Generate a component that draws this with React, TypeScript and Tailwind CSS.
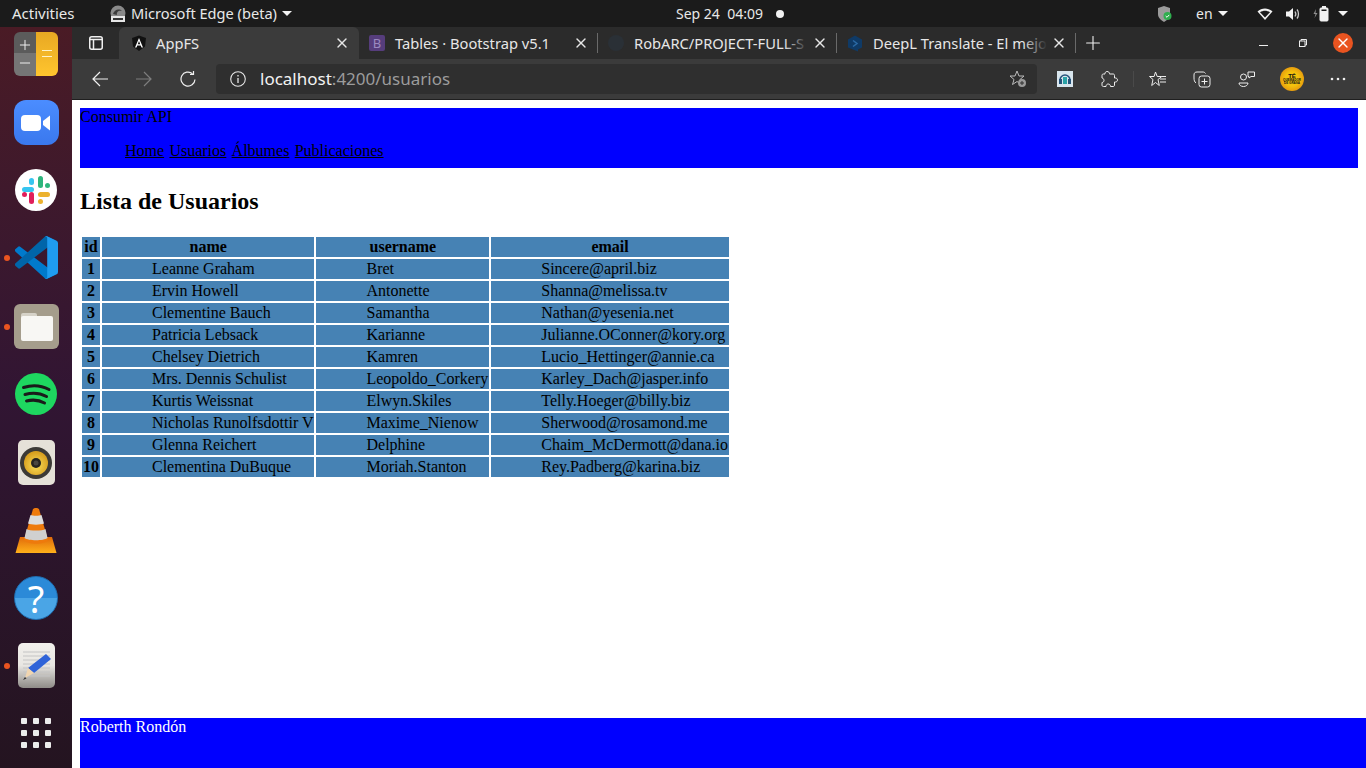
import React from "react";
import { X, Plus, Minus } from "lucide-react";

const users = [
  [1, "Leanne Graham", "Bret", "Sincere@april.biz"],
  [2, "Ervin Howell", "Antonette", "Shanna@melissa.tv"],
  [3, "Clementine Bauch", "Samantha", "Nathan@yesenia.net"],
  [4, "Patricia Lebsack", "Karianne", "Julianne.OConner@kory.org"],
  [5, "Chelsey Dietrich", "Kamren", "Lucio_Hettinger@annie.ca"],
  [6, "Mrs. Dennis Schulist", "Leopoldo_Corkery", "Karley_Dach@jasper.info"],
  [7, "Kurtis Weissnat", "Elwyn.Skiles", "Telly.Hoeger@billy.biz"],
  [8, "Nicholas Runolfsdottir V", "Maxime_Nienow", "Sherwood@rosamond.me"],
  [9, "Glenna Reichert", "Delphine", "Chaim_McDermott@dana.io"],
  [10, "Clementina DuBuque", "Moriah.Stanton", "Rey.Padberg@karina.biz"],
];

function Caret() {
  return <span className="inline-block w-0 h-0 border-l-[5px] border-r-[5px] border-t-[5px] border-l-transparent border-r-transparent border-t-[#f2f2f2]" />;
}

function TopBar() {
  return (
    <div className="h-[27px] shrink-0 bg-[#1b1b1b] flex items-center text-[#e8e8e8] text-[14.6px] relative">
      <span className="ml-[12px] w-[97px] text-[15px]">Activities</span>
      <svg width="18" height="18" viewBox="0 0 18 18" className="mr-[4px]">
        <circle cx="9" cy="8" r="7.5" fill="#8a8a8a" />
        <path d="M4 9c1-4 6-6 9-3-2-1-6 0-5 4z" fill="#3a3a3a" />
        <rect x="2" y="11" width="14" height="6" fill="#e6e6e6" />
        <rect x="4" y="13" width="10" height="2" fill="#333" />
      </svg>
      <span className="mr-[5px]">Microsoft Edge (beta)</span>
      <Caret />
      <div className="absolute left-[676px] top-0 h-[27px] flex items-center text-[14px]">
        <span>Sep 24&nbsp;&nbsp;04:09</span>
        <span className="ml-[13px] w-[8px] h-[8px] rounded-full bg-[#f2f2f2]" />
      </div>
      <div className="absolute left-[1157px] top-0 h-[27px] flex items-center text-[14px]">
        <svg width="16" height="18" viewBox="0 0 16 18"><path d="M1 3l6-2 6 2v6c0 4-3 6-6 8-3-2-6-4-6-8z" fill="#9b9b9b" /><circle cx="10.5" cy="11" r="4" fill="#2fae4e" /><path d="M8.7 11l1.3 1.3 2.2-2.4" stroke="#fff" strokeWidth="1" fill="none" /></svg>
        <span className="ml-[23px] mr-[5px]">en</span>
        <Caret />
        <svg width="16" height="14" viewBox="0 0 16 14" className="ml-[29px]"><path d="M0.5 4.5C4.5 0.5 11.5 0.5 15.5 4.5L8 13z" fill="#f2f2f2" /><path d="M3 5.2c3-2 7-2 10 0L8 10.5z" fill="#1b1b1b" /></svg>
        <svg width="16" height="14" viewBox="0 0 16 14" className="ml-[12px]"><path d="M1 4.5h3L8 1v12L4 9.5H1z" fill="#f2f2f2" /><path d="M10 4.5c1 1.5 1 3.5 0 5M12 2.5c2 2.5 2 6.500 0 9" stroke="#c8c8c8" strokeWidth="1.300" fill="none" /></svg>
        <svg width="16" height="17" viewBox="0 0 16 17" className="ml-[12px]"><path d="M3 4L0.500 9h2L1.500 13 4.500 8h-2z" fill="#8f8f8f" /><rect x="7" y="3" width="8" height="13" rx="1" fill="#f2f2f2" stroke="#f2f2f2" /><rect x="8.500" y="4.500" width="5" height="1.500" fill="#1b1b1b" /><rect x="9" y="1" width="4" height="2" fill="#f2f2f2" /></svg>
        <span className="ml-[9px] inline-flex"><Caret /></span>
      </div>
    </div>
  );
}

function DockIcon({ children, dot, y }: { children: React.ReactNode; dot?: boolean; y: number }) {
  return (
    <div className="absolute left-0 w-[72px] flex justify-center" style={{ top: y }}>
      {dot && <span className="absolute left-[4px] top-1/2 -mt-[3px] w-[6px] h-[6px] rounded-full bg-[#e95420]" />}
      {children}
    </div>
  );
}

function Dock() {
  return (
    <div className="w-[72px] shrink-0 relative bg-gradient-to-b from-[#4a1b25] via-[#311533] to-[#241420]">
      <DockIcon y={5}>
        <div className="w-[44px] h-[44px] rounded-[6px] overflow-hidden flex relative">
          <div className="w-[22px] flex flex-col">
            <div className="h-[21px] bg-[#5b5b5b] flex items-end justify-center"><Plus size={16} color="#eee" strokeWidth={1.5} /></div>
            <div className="h-[23px] bg-[#757575] flex items-start justify-center pt-[2px]"><Minus size={16} color="#eee" strokeWidth={1.5} /></div>
          </div>
          <div className="w-[22px] bg-gradient-to-b from-[#e8a823] to-[#ffc52e] flex flex-col items-center pt-[18px] gap-[5px]">
            <span className="w-[10px] h-[1px] bg-[#fff3c8]" />
            <span className="w-[10px] h-[1px] bg-[#fff3c8]" />
          </div>
        </div>
      </DockIcon>
      <DockIcon y={73}>
        <div className="w-[45px] h-[45px] rounded-[12px] bg-gradient-to-b from-[#4b8dff] to-[#3a78ee] flex items-center justify-center">
          <svg width="30" height="18" viewBox="0 0 30 18"><rect x="0" y="1" width="20" height="16" rx="4" fill="#fff" /><path d="M22 7l7-5.500v15L22 11z" fill="#fff" /></svg>
        </div>
      </DockIcon>
      <DockIcon y={142}>
        <div className="w-[42px] h-[42px] rounded-full bg-white flex items-center justify-center">
          <svg width="28" height="28" viewBox="0 0 28 28">
            <rect x="0" y="11" width="12" height="5" rx="2.500" fill="#36c5f0" /><rect x="7" y="2" width="5" height="7" rx="2.500" fill="#36c5f0" />
            <rect x="16" y="0" width="5" height="12" rx="2.500" fill="#2eb67d" /><rect x="23" y="7" width="5" height="5" rx="2.500" fill="#2eb67d" />
            <rect x="16" y="16" width="12" height="5" rx="2.500" fill="#ecb22e" /><rect x="16" y="23" width="5" height="5" rx="2.500" fill="#ecb22e" />
            <rect x="7" y="16" width="5" height="12" rx="2.500" fill="#e01e5a" /><rect x="0" y="16" width="5" height="5" rx="2.500" fill="#e01e5a" />
          </svg>
        </div>
      </DockIcon>
      <DockIcon y={209} dot>
        <svg width="43" height="43" viewBox="0 0 100 100">
          <path d="M96.4 89.2 75.8 99.1a6.2 6.2 0 0 1-7.100-1.200L1.300 36.400a4.200 4.200 0 0 1 0-6.100l5.500-5a4.200 4.200 0 0 1 5.300-.2l81.200 61.600a4.100 4.100 0 0 0 6.600-3.300v.2a6.200 6.200 0 0 1-3.500 5.600z" fill="#007acc" />
          <path d="M96.4 10.800 75.800.9a6.200 6.200 0 0 0-7.100 1.200L1.300 63.600a4.200 4.200 0 0 0 0 6.100l5.500 5a4.200 4.200 0 0 0 5.300.2l81.200-61.600a4.100 4.100 0 0 1 6.600 3.300v-.2a6.200 6.200 0 0 0-3.500-5.600z" fill="#0065a9" />
          <path d="M75.800 99.100a6.200 6.200 0 0 1-7.100-1.200c2.300 2.300 6.200.7 6.200-2.600V4.700c0-3.300-3.900-4.900-6.200-2.600a6.200 6.200 0 0 1 7.100-1.200l20.600 9.900a6.200 6.200 0 0 1 3.600 5.600v67.200a6.200 6.200 0 0 1-3.500 5.600z" fill="#1f9cf0" />
        </svg>
      </DockIcon>
      <DockIcon y={277} dot>
        <div className="w-[45px] h-[45px] rounded-[6px] bg-[#a59d8c] flex items-center justify-center relative">
          <div className="absolute left-[7px] top-[9px] w-[16px] h-[8px] rounded-[2px] bg-[#d6d2c8]" />
          <div className="absolute left-[7px] top-[12px] w-[32px] h-[25px] rounded-[2px] bg-[#f8f7f4]" />
        </div>
      </DockIcon>
      <DockIcon y={346}>
        <svg width="42" height="42" viewBox="0 0 42 42">
          <circle cx="21" cy="21" r="21" fill="#1ed760" />
          <path d="M8.500 14.500c8-2.500 18-2 25.500 2M10 21.500c7-2 15-1.500 21.500 2M11.500 28c6-1.500 12.500-1 18 2" stroke="#1a1a1a" strokeWidth="3" strokeLinecap="round" fill="none" />
        </svg>
      </DockIcon>
      <DockIcon y={413}>
        <div className="w-[37px] h-[45px] rounded-[5px] bg-[#e5e1d8] flex items-center justify-center">
          <svg width="32" height="32" viewBox="0 0 32 32">
            <defs>
              <radialGradient id="spk" cx="50%" cy="60%" r="55%"><stop offset="0%" stopColor="#f8de5a" /><stop offset="100%" stopColor="#d89f1e" /></radialGradient>
            </defs>
            <circle cx="16" cy="16" r="16" fill="#3c3a36" /><circle cx="16" cy="16" r="12" fill="url(#spk)" /><circle cx="16" cy="16" r="5" fill="#26241f" /><circle cx="16" cy="16" r="2.500" fill="#4a4740" />
          </svg>
        </div>
      </DockIcon>
      <DockIcon y={480}>
        <svg width="42" height="46" viewBox="0 0 42 46">
          <defs>
            <linearGradient id="vb" x1="0" y1="0" x2="0" y2="1"><stop offset="0%" stopColor="#e06a0a" /><stop offset="100%" stopColor="#ffb11a" /></linearGradient>
          </defs>
          <path d="M5 30h32l4.500 16H.5z" fill="url(#vb)" />
          <path d="M18 2c1-1.500 5-1.500 6 0l9 31c-3 5-21 5-24 0z" fill="#ee7a0c" />
          <path d="M15.500 8c2 1 9 1 11 0l2.500 8.500c-3 1.500-13 1.500-16 0z" fill="#dcdcdc" />
          <path d="M11.500 22c3 2 16 2 19 0l2 9c-4 3-19 3-23 0z" fill="#d0d0d0" />
        </svg>
      </DockIcon>
      <DockIcon y={549}>
        <div className="w-[44px] h-[44px] rounded-full bg-gradient-to-b from-[#2b8ad8] from-50% to-[#4aa5e6] to-50% border border-[#1f6fb2] flex items-center justify-center text-white text-[38px] leading-none">?</div>
      </DockIcon>
      <DockIcon y={616} dot>
        <div className="w-[37px] h-[45px] rounded-[5px] bg-gradient-to-b from-[#f2f0ec] via-[#e8e6e2] to-[#8f8c88] relative overflow-hidden">
          <svg width="37" height="45" viewBox="0 0 37 45">
            <path d="M5 9h27M5 13h27M5 17h27M5 21h27M5 25h27M5 29h27M5 33h27" stroke="#c4c4c4" strokeWidth="1" />
            <path d="M28 11l5 5-17 14-6-5z" fill="#2f63d8" />
            <path d="M10 25l6 5-9 5z" fill="#f0d5b0" /><path d="M5 37l2-3 1.500 1.500z" fill="#333" />
          </svg>
        </div>
      </DockIcon>
      <DockIcon y={691}>
        <div className="grid grid-cols-3 gap-[6px]">
          {Array.from({ length: 9 }).map((_, i) => (
            <span key={i} className="w-[6px] h-[6px] rounded-[1px] bg-[#ececec]" />
          ))}
        </div>
      </DockIcon>
    </div>
  );
}

function Tab({ title, icon, fade }: { title: string; icon: React.ReactNode; fade?: boolean }) {
  return (
    <div className="w-[239px] h-[32px] flex items-center relative shrink-0">
      <span className="w-[16px] h-[16px] flex items-center justify-center shrink-0 ml-[10px]">{icon}</span>
      <span className="ml-[10px] flex-1 whitespace-nowrap text-[14.7px] text-[#e6e6e6] relative">
        {title}
        {fade && <span className="absolute right-0 top-0 bottom-0 w-[24px] bg-gradient-to-r from-transparent to-[#2b2b2b]" />}
      </span>
      <X size={16} color="#e6e6e6" className="mr-[8px] ml-[4px] shrink-0" />
      <span className="w-[1px] h-[20px] bg-[#6a6a6a] shrink-0" />
    </div>
  );
}

const iconStroke = "#eeeeee";

function Browser() {
  return (
    <div className="shrink-0">
      <div className="h-[32px] bg-[#2b2b2b] flex items-center relative">
        <div className="w-[47px] flex justify-center">
          <svg width="14" height="14" viewBox="0 0 14 14"><rect x="0.750" y="0.750" width="12.500" height="12.500" rx="2" fill="none" stroke="#f0f0f0" strokeWidth="1.500" /><path d="M1 3.500h12M4.500 3.500V13" stroke="#f0f0f0" strokeWidth="1.500" /></svg>
        </div>
        <div className="w-[240px] h-[32px] bg-[#3b3b3b] rounded-t-[6px] flex items-center shrink-0">
          <svg width="16" height="17" viewBox="0 0 16 16" className="ml-[12px]"><path d="M8 0L1 2.500 2 11l6 4.500 6-4.500 1-8.500z" fill="#111" /><path d="M8 2.500L4 12h1.500l.8-2h3.400l.8 2H12zM6.800 8.700L8 5.500l1.200 3.200z" fill="#fff" /></svg>
          <span className="ml-[9px] flex-1 text-[14.7px] text-[#e6e6e6]">AppFS</span>
          <X size={16} color="#e6e6e6" className="mr-[9px]" />
        </div>
        <Tab title="Tables · Bootstrap v5.1" icon={<span className="w-[16px] h-[16px] rounded-[2px] bg-[#563d7c] text-[#9b8ac0] text-[13px] leading-[16px] text-center">B</span>} />
        <Tab fade title="RobARC/PROJECT-FULL-S" icon={<svg width="16" height="16" viewBox="0 0 16 16"><circle cx="8" cy="8" r="8" fill="#2a3036" /></svg>} />
        <Tab fade title="DeepL Translate - El mejo" icon={<svg width="16" height="17" viewBox="0 0 16 16"><path d="M8 0l7 4v8l-4 2v2L1 12V4z" fill="#0f3a66" /><path d="M6 5l4 3-4 3" stroke="#2b6aa5" strokeWidth="1.500" fill="none" /></svg>} />
        <Plus size={22} color="#f0f0f0" strokeWidth={1.200} className="ml-[6px]" />
        <div className="absolute right-0 top-0 h-[32px] flex items-center">
          <span className="w-[9px] h-[1px] bg-[#eee] mt-[5px]" />
          <svg width="8" height="8" viewBox="0 0 8 8" className="ml-[31px]"><path d="M2 2V.5h5.500V6H6" stroke="#eee" fill="none" /><rect x=".5" y="2" width="5.500" height="5.500" fill="none" stroke="#eee" /></svg>
          <span className="ml-[26px] mr-[13px] w-[20px] h-[20px] rounded-full bg-[#e95420] flex items-center justify-center"><X size={16} color="#fff" strokeWidth={2} /></span>
        </div>
      </div>
      <div className="h-[40px] bg-[#3b3b3b] flex items-center relative">
        <svg width="16" height="16" viewBox="0 0 16 16" className="ml-[20px]"><path d="M16 8H1M8 1L1 8l7 7" fill="none" stroke="#f0f0f0" strokeWidth="1.200" /></svg>
        <svg width="16" height="16" viewBox="0 0 16 16" className="ml-[28px]"><path d="M0 8h15M8 1l7 7-7 7" fill="none" stroke="#7e7e7e" strokeWidth="1.200" /></svg>
        <svg width="16" height="16" viewBox="0 0 16 16" className="ml-[28px]"><path d="M15 8.500a7 7 0 11-2.500-5.800M13.500 0v3.500H10" fill="none" stroke="#f0f0f0" strokeWidth="1.200" /></svg>
        <div className="ml-[20px] w-[821px] h-[30px] rounded-[4px] bg-[#2f2f2f] flex items-center relative">
          <svg width="16" height="16" viewBox="0 0 16 16" className="ml-[14px]"><circle cx="8" cy="8" r="7.300" fill="none" stroke="#e6e6e6" strokeWidth="1.100" /><path d="M8 7v5M8 4v1.500" stroke="#e6e6e6" strokeWidth="1.300" /></svg>
          <span className="ml-[14px] text-[17px]"><span className="text-[#f2f2f2]">localhost</span><span className="text-[#9c9c9c]">:4200/usuarios</span></span>
          <svg width="18" height="18" viewBox="0 0 18 18" className="absolute right-[10px] top-[6px]"><path d="M8 1l2 5h5l-4 3.500 1.500 5L8 11.500 3.500 14.500 5 9.500 1 6h5z" fill="none" stroke="#bbb" /><circle cx="13" cy="13" r="4" fill="#9a9a9a" /><path d="M11 13h4M13 11v4" stroke="#2f2f2f" /></svg>
        </div>
        <div className="w-[16px] h-[16px] ml-[20px] bg-[#d9e6ee] flex items-center justify-center shrink-0">
          <svg width="14" height="14" viewBox="0 0 14 14"><path d="M2 8a5 5 0 0110 0" stroke="#24527a" strokeWidth="1.500" fill="none" /><rect x="1" y="7" width="3" height="5" fill="#24527a" /><rect x="10" y="7" width="3" height="5" fill="#24527a" /><rect x="5" y="5" width="4" height="7" fill="#2aa3a8" /></svg>
        </div>
        <svg width="18" height="18" viewBox="0 0 18 18" className="ml-[27px] shrink-0"><path d="M7 1.500c1.500 0 2.500 1 2.500 2v.5h3.500c1 0 1.500.5 1.500 1.500V8h1c1 0 2 .8 2 2s-1 2-2 2h-1v3c0 1-.5 1.500-1.500 1.500h-2.500c0-1.500-1-2.500-2.300-2.500S6 15 6 16.500H3.500C2.500 16.500 2 16 2 15v-2.500c1.200 0 2-1 2-2S3.200 8 2 8V5.500C2 4.500 2.500 4 3.500 4h1.500v-.5c0-1 .8-2 2-2z" fill="none" stroke={iconStroke} strokeWidth="1" /></svg>
        <span className="ml-[15px] w-[1px] h-[16px] bg-[#4a4a4a] shrink-0" />
        <svg width="18" height="17" viewBox="0 0 18 17" className="ml-[15px] shrink-0"><path d="M6.500 1l1.700 4.500h4.600L9 8.500l1.300 6-3.800-3-3.800 3L4 8.500.500 5.500h4.600z" fill="none" stroke={iconStroke} /><path d="M11 8h6M11 11h6M13 5.500h4" stroke={iconStroke} /></svg>
        <svg width="18" height="18" viewBox="0 0 18 18" className="ml-[26px] shrink-0"><path d="M3 13c-1.500-1-2-3-2-5V5c0-2 1-3 3-3h6c1 0 2 .5 2.500 1.500" fill="none" stroke={iconStroke} /><rect x="6" y="6" width="11" height="11" rx="2.500" fill="none" stroke={iconStroke} /><path d="M11.500 8.500v6M8.500 11.500h6" stroke={iconStroke} /></svg>
        <svg width="18" height="18" viewBox="0 0 18 18" className="ml-[27px] shrink-0"><circle cx="5.500" cy="7" r="3" fill="none" stroke={iconStroke} /><path d="M1 13h9c0 2-2 3.500-4.500 3.500S1 15 1 13z" fill="none" stroke={iconStroke} /><path d="M10 2h6.500v4.500H13L11 8V6.500h-1z" fill="none" stroke={iconStroke} /></svg>
        <span className="ml-[24px] w-[24px] h-[24px] shrink-0 rounded-full bg-[radial-gradient(circle,#f5c20c_40%,#d97a10_100%)] flex flex-col items-center justify-center text-[#111] text-[3px] font-bold leading-[3.500px] text-center font-['Liberation_Sans',sans-serif]"><span className="text-[6px] leading-[6px]">TÉ</span>QUEMADOR<br />DE GRASA</span>
        <svg width="16" height="4" viewBox="0 0 16 4" className="ml-[26px] shrink-0"><circle cx="2" cy="2" r="1.300" fill="#eee" /><circle cx="8" cy="2" r="1.300" fill="#eee" /><circle cx="14" cy="2" r="1.300" fill="#eee" /></svg>
      </div>
      <div className="h-[1px] bg-[#1f1f1f]"></div>
    </div>
  );
}

function Page() {
  return (
    <div className="flex-1 bg-white text-black relative flex flex-col font-['Liberation_Serif',serif] text-[16px] leading-[normal] pl-[8px] pt-[8px]">
      <div className="bg-[#0000ff] h-[60px] mr-[8px]">
        <div>Consumir API</div>
        <ul className="pl-[40px] mt-[16px] flex">
          <li className="flex ml-[5px] gap-[5.3px]">
            <a className="underline">Home</a>
            <a className="underline">Usuarios</a>
            <a className="underline">Álbumes</a>
            <a className="underline">Publicaciones</a>
          </li>
        </ul>
      </div>
      <h2 className="text-[24px] font-bold mt-[20px] mb-[20px] leading-[27px]">Lista de Usuarios</h2>
      <table className="w-fit border-separate border-spacing-[2px]">
        <thead>
          <tr className="bg-[#4682b4]">
            {["id", "name", "username", "email"].map((h) => (
              <th key={h} className="p-[1px] font-bold text-center">{h}</th>
            ))}
          </tr>
        </thead>
        <tbody>
          {users.map((u) => (
            <tr key={u[0]} className="bg-[#4682b4]">
              <td className="p-[1px] font-bold text-center">{u[0]}</td>
              <td className="p-[1px] pl-[50px]">{u[1]}</td>
              <td className="p-[1px] pl-[50px]">{u[2]}</td>
              <td className="p-[1px] pl-[50px]">{u[3]}</td>
            </tr>
          ))}
        </tbody>
      </table>
      <div className="mt-auto h-[50px] bg-[#0000ff] text-white">Roberth Rondón</div>
    </div>
  );
}

export default function App() {
  return (
    <div className="w-[1366px] h-[768px] overflow-hidden flex flex-col font-['Noto_Sans','Liberation_Sans',sans-serif]">
      <TopBar />
      <div className="flex-1 flex min-h-0">
        <Dock />
        <div className="flex-1 flex flex-col min-w-0">
          <Browser />
          <Page />
        </div>
      </div>
    </div>
  );
}
